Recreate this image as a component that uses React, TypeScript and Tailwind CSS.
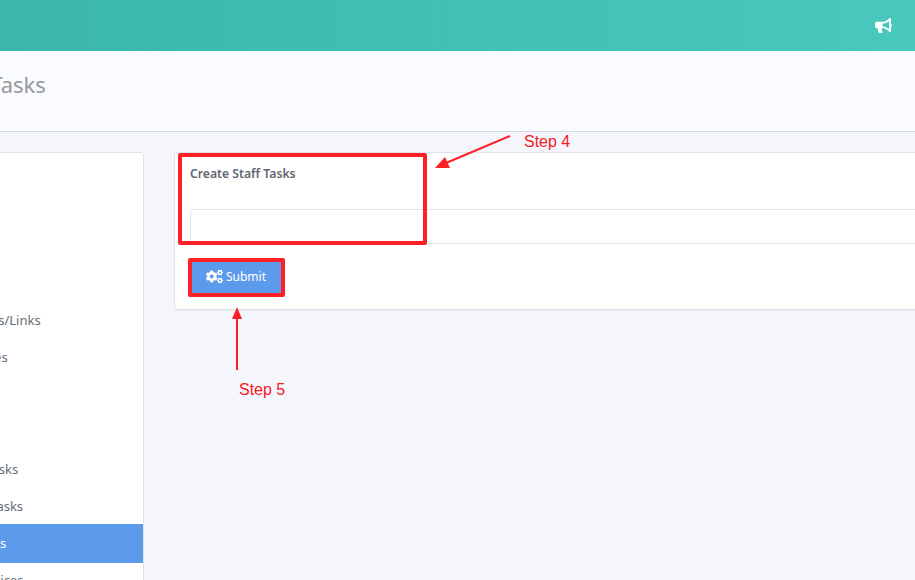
import { FaBullhorn, FaCogs } from "react-icons/fa";

const menu = [
  { label: "Home" },
  { label: "Profile" },
  { label: "Staff" },
  { label: "Users" },
  { label: "Resources/Links" },
  { label: "Categories" },
  { label: "Reports" },
  { label: "Settings" },
  { label: "Create Tasks" },
  { label: "Update Tasks" },
  { label: "Staff Tasks", active: true },
  { label: "Staff Invoices" },
];

const Sidebar = () => {
  return (
    <div className="w-[261px] ml-[-117px] shrink-0 bg-white border border-[#dfe3ea] rounded-[3px] h-fit pt-[0.4px]">
      {menu.map((item, index) => (
        <div
          key={index}
          className={
            item.active
              ? "h-[39px] -my-px relative flex items-center pl-[58px] text-[13px] text-white bg-[#5c9bec]"
              : "h-[37.2px] flex items-center pl-[58px] text-[13px] text-[#666e78]"
          }
        >
          {item.label}
        </div>
      ))}
    </div>
  );
};

const Annotations = () => {
  return (
    <div className="absolute inset-0 pointer-events-none">
      <div className="absolute left-[178px] top-[153px] w-[249px] h-[92px] border-[4px] border-[#ff1f26] rounded-[2px]" />
      <div className="absolute left-[188px] top-[258px] w-[97px] h-[39px] border-[4px] border-[#ff1f26] rounded-[2px]" />
      <svg className="absolute left-0 top-0" width="915" height="580">
        <line x1="510" y1="136" x2="446" y2="163" stroke="#ff1f26" strokeWidth="2" />
        <polygon points="435,168 445,157 450,168" fill="#ff1f26" />
        <line x1="237" y1="370" x2="237" y2="318" stroke="#ff1f26" strokeWidth="2" />
        <polygon points="237,307 232,319 242,319" fill="#ff1f26" />
      </svg>
      <span className="absolute left-[524px] top-[133px] text-[16px] leading-[18px] text-[#f5191f] font-['Liberation_Sans',sans-serif]">
        Step 4
      </span>
      <span className="absolute left-[239px] top-[381px] text-[16px] leading-[18px] text-[#f5191f] font-['Liberation_Sans',sans-serif]">
        Step 5
      </span>
    </div>
  );
};

export default function App() {
  return (
    <div className="relative w-[915px] h-[580px] overflow-hidden bg-[#f5f6fb] font-['Noto_Sans',sans-serif]">
      <header className="h-[51px] bg-gradient-to-r from-[#3ab7aa] to-[#48c9bc] flex items-center justify-end pr-[23px]">
        <FaBullhorn className="text-white w-[17px] h-[15px]" />
      </header>

      <div className="h-[81px] bg-[#fafbfe] border-b border-[#d5dbe4] flex items-center pb-[13px]">
        <h1 className="ml-[-63px] text-[22px] text-[#97999c]">Staff Tasks</h1>
      </div>

      <div className="flex gap-[30px] pt-5">
        <Sidebar />
        <div className="w-[800px] shrink-0 h-[158px] bg-white border border-[#dfe3ea] rounded-[3px] px-[15px] shadow-[0_1px_1px_rgba(0,0,0,0.05)]">
          <label className="block mt-[12px] text-[12.2px] leading-[18px] font-semibold text-[#5f6670]">
            Create Staff Tasks
          </label>
          <input
            type="text"
            className="block w-full h-[35px] mt-[26px] bg-white border border-[#e0e5ea] rounded-[3px]"
          />
          <button className="mt-[16px] w-[92px] h-[33px] bg-[#5c9bec] text-white text-[12px] rounded-[2px] flex items-center justify-center gap-[3px]">
            <FaCogs className="w-[17px] h-[17px]" />
            Submit
          </button>
        </div>
      </div>

      <Annotations />
    </div>
  );
}
